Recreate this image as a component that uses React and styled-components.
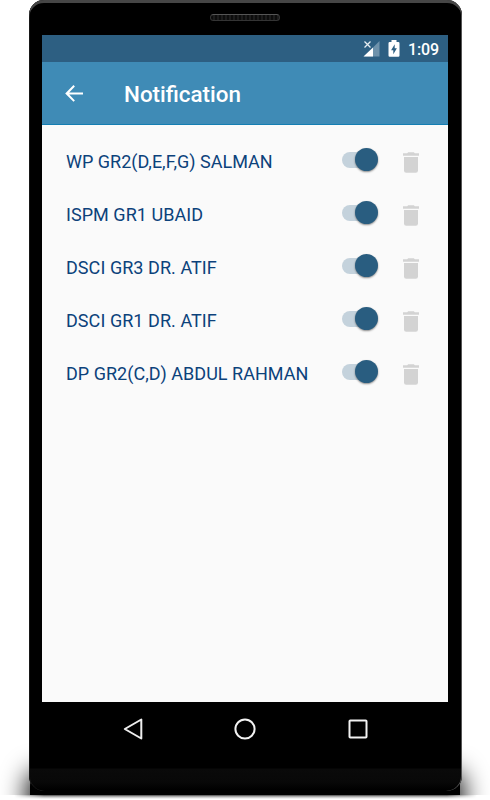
import React from "react";
import styled, { createGlobalStyle } from "styled-components";

const GlobalStyle = createGlobalStyle`
  * { box-sizing: border-box; }
  body { margin: 0; background: #fff; font-family: Roboto, sans-serif; }
`;

const Stage = styled.main`
  position: relative;
  width: 490px;
  height: 800px;
  padding-left: 29px;
  overflow: hidden;
  background: #fff;
`;

const FloorShadow = styled.div`
  position: absolute;
  left: 0;
  top: 740px;
  width: 490px;
  height: 55px;
  overflow: hidden;
  &::before {
    content: "";
    position: absolute;
    left: 30px;
    top: 34px;
    width: 430px;
    height: 42px;
    border-radius: 12px;
    background: #000;
    box-shadow: 0 0 26px 3px #000;
  }
`;

const FloorEdge = styled.div`
  position: absolute;
  left: 14px;
  top: 795px;
  width: 463px;
  height: 4px;
  background: linear-gradient(#4a4a4a, #bbb 45%, #fff);
  mask-image: linear-gradient(90deg, transparent, #000 30px, #000 433px, transparent);
`;

const Phone = styled.div`
  position: relative;
  display: flex;
  flex-direction: column;
  width: 433px;
  height: 791px;
  padding: 0 14px 0 13px;
  border-radius: 15px 15px 15px 15px;
  background: linear-gradient(#000 768px, #0a0a0a 769px, #080808 782px, #000 790px);
  box-shadow: inset 0 3px 0 #464646, inset -1px 0 0 #555, inset 1px 0 0 #181818;
`;

const TopBezel = styled.div`
  display: flex;
  justify-content: center;
  height: 35px;
  padding-top: 14px;
`;

const Speaker = styled.div`
  width: 70px;
  height: 7px;
  border: 1px solid #343434;
  border-top-color: #555;
  border-radius: 4px;
  background: repeating-linear-gradient(90deg, #0c0c0c 0 2px, #1c1c1c 2px 4px);
`;

const Screen = styled.section`
  height: 667px;
  background: #fafafa;
`;

const StatusBar = styled.div`
  display: flex;
  align-items: center;
  justify-content: flex-end;
  height: 27px;
  padding-right: 9px;
  background: #2d5f82;
  color: #fff;
`;

const Clock = styled.span`
  margin-left: 8px;
  padding-top: 2px;
  font-size: 16px;
  line-height: 26px;
  font-weight: 500;
  letter-spacing: -0.1px;
`;

const SignalIcon = styled.svg`
  width: 17px;
  height: 17px;
  margin-right: 8px;
`;

const BatteryIcon = styled.svg`
  width: 12px;
  height: 17px;
`;

const AppBar = styled.header`
  display: flex;
  align-items: center;
  height: 63px;
  padding-left: 20px;
  border-bottom: 1px solid #147eb2;
  background: #3f8bb6;
`;

const BackButton = styled.button`
  display: flex;
  padding: 0;
  border: 0;
  background: none;
  svg { width: 24px; height: 24px; }
`;

const Title = styled.h1`
  margin: 1px 0 0 38px;
  color: #fff;
  font-size: 22.4px;
  line-height: 30px;
  font-weight: 500;
`;

const List = styled.ul`
  margin: 0;
  padding: 10px 24px 0;
  list-style: none;
`;

const Row = styled.li`
  display: flex;
  align-items: center;
  height: 53px;
`;

const Label = styled.span`
  flex: 1;
  color: #0c427b;
  font-size: 18px;
  line-height: 24px;
  letter-spacing: ${(p) => p.$tracking || 0}px;
  white-space: nowrap;
`;

const Toggle = styled.button`
  display: flex;
  align-items: center;
  justify-content: flex-end;
  width: 36px;
  height: 16px;
  margin: 0 25px 4px 0;
  padding: 0;
  border: 0;
  background: linear-gradient(#c4d2dc, #c4d2dc) left / 24px 16px no-repeat;
  border-radius: 8px;
`;

const Thumb = styled.span`
  flex: none;
  width: 23px;
  height: 23px;
  border-radius: 50%;
  background: #295d80;
  box-shadow: 0 1px 2px rgba(0, 0, 0, 0.45);
`;

const DeleteButton = styled.button`
  display: flex;
  margin: 1px 5px 0 0;
  padding: 0;
  border: 0;
  background: none;
  svg { width: 16px; height: 21px; }
`;

const NavBar = styled.nav`
  display: flex;
  align-items: center;
  justify-content: center;
  gap: 88.5px;
  height: 54px;
  svg { width: 24px; height: 24px; }
`;

const rows = [
  { name: "WP GR2(D,E,F,G) SALMAN" },
  { name: "ISPM GR1 UBAID", tracking: 0.05 },
  { name: "DSCI GR3 DR. ATIF", tracking: 0.06 },
  { name: "DSCI GR1 DR. ATIF", tracking: 0.06 },
  { name: "DP GR2(C,D) ABDUL RAHMAN", tracking: 0.02 },
];

function TrashIcon() {
  return (
    <svg viewBox="0 0 16 21" fill="#d3d3d3">
      <path d="M0 1.3h4.2L5.2.2h5.6l1 1.1H16v2.5H0z" />
      <path d="M1 5.1h14v13.4q0 2.2-2.2 2.2H3.2Q1 20.7 1 18.5z" />
    </svg>
  );
}

function NotificationRow({ name, tracking }) {
  return (
    <Row>
      <Label $tracking={tracking}>{name}</Label>
      <Toggle role="switch" aria-checked="true" aria-label={name}>
        <Thumb />
      </Toggle>
      <DeleteButton aria-label="Delete">
        <TrashIcon />
      </DeleteButton>
    </Row>
  );
}

export default function App() {
  return (
    <Stage>
      <GlobalStyle />
      <FloorShadow />
      <FloorEdge />
      <Phone>
        <TopBezel>
          <Speaker />
        </TopBezel>
        <Screen>
          <StatusBar>
            <SignalIcon viewBox="0 0 17 17">
              <path d="M16.5 1v15.500H1z" fill="#6e92ab" />
              <path d="M10 7.500v9H.5z" fill="#fff" />
              <path d="M1.500 1.500l6 6M7.500 1.500l-6 6" stroke="#e5edf2" strokeWidth="1.3" />
            </SignalIcon>
            <BatteryIcon viewBox="0 0 12 17">
              <path d="M3.500 0h5v2H10.300q1.200 0 1.200 1.200v12.300q0 1.200-1.200 1.200H1.700Q.5 16.700.5 15.500V3.200Q.5 2 1.700 2h1.800z" fill="#fff" />
              <path d="M6.700 4.300v3.900h2.200l-3.600 6V10.300H3.100z" fill="#2d5f82" />
            </BatteryIcon>
            <Clock>1:09</Clock>
          </StatusBar>
          <AppBar>
            <BackButton aria-label="Back">
              <svg viewBox="0 0 24 24" fill="#fff">
                <path d="M21 11.400H7.200l5.700-5.900L11.500 4.100 3.200 12.500l8.300 8.300 1.400-1.400L7.200 13.600H21z" />
              </svg>
            </BackButton>
            <Title>Notification</Title>
          </AppBar>
          <List>
            {rows.map((r) => (
              <NotificationRow key={r.name} name={r.name} tracking={r.tracking} />
            ))}
          </List>
        </Screen>
        <NavBar>
          <svg viewBox="0 0 24 24" fill="none" stroke="#eee" strokeWidth="2" strokeLinejoin="round">
            <path d="M20.300 2.500v19L3.800 12z" />
          </svg>
          <svg viewBox="0 0 24 24" fill="none" stroke="#f2f2f2" strokeWidth="2">
            <circle cx="12" cy="12" r="9.600" />
          </svg>
          <svg viewBox="0 0 24 24" fill="none" stroke="#f2f2f2" strokeWidth="2">
            <rect x="3.500" y="3.500" width="17" height="17" rx="0.8" />
          </svg>
        </NavBar>
      </Phone>
    </Stage>
  );
}
